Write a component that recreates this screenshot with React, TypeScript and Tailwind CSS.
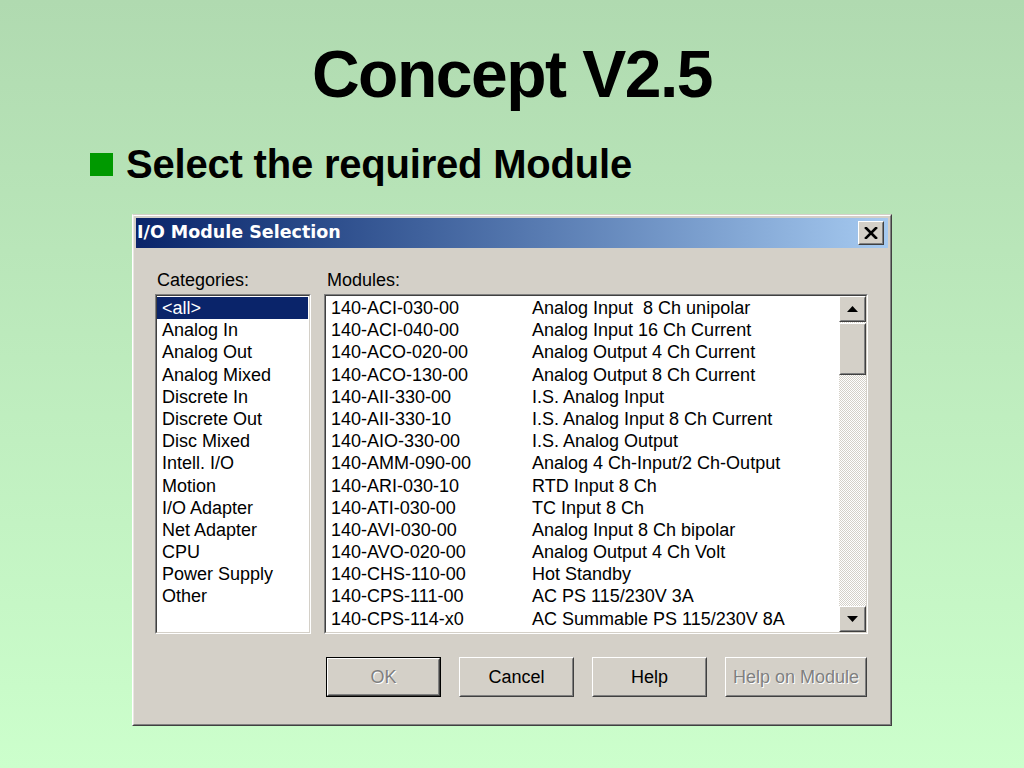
import React from "react";

const categories = [
  "<all>",
  "Analog In",
  "Analog Out",
  "Analog Mixed",
  "Discrete In",
  "Discrete Out",
  "Disc Mixed",
  "Intell. I/O",
  "Motion",
  "I/O Adapter",
  "Net Adapter",
  "CPU",
  "Power Supply",
  "Other",
];

const modules: [string, string][] = [
  ["140-ACI-030-00", "Analog Input  8 Ch unipolar"],
  ["140-ACI-040-00", "Analog Input 16 Ch Current"],
  ["140-ACO-020-00", "Analog Output 4 Ch Current"],
  ["140-ACO-130-00", "Analog Output 8 Ch Current"],
  ["140-AII-330-00", "I.S. Analog Input"],
  ["140-AII-330-10", "I.S. Analog Input 8 Ch Current"],
  ["140-AIO-330-00", "I.S. Analog Output"],
  ["140-AMM-090-00", "Analog 4 Ch-Input/2 Ch-Output"],
  ["140-ARI-030-10", "RTD Input 8 Ch"],
  ["140-ATI-030-00", "TC Input 8 Ch"],
  ["140-AVI-030-00", "Analog Input 8 Ch bipolar"],
  ["140-AVO-020-00", "Analog Output 4 Ch Volt"],
  ["140-CHS-110-00", "Hot Standby"],
  ["140-CPS-111-00", "AC PS 115/230V 3A"],
  ["140-CPS-114-x0", "AC Summable PS 115/230V 8A"],
];

function Raised({ className = "", children }: { className?: string; children?: React.ReactNode }) {
  return (
    <div className={`border border-t-white border-l-white border-r-[#404040] border-b-[#404040] ${className}`}>
      <div className="w-full h-full border border-t-[#d4d0c8] border-l-[#d4d0c8] border-r-[#808080] border-b-[#808080] flex items-center justify-center">
        {children}
      </div>
    </div>
  );
}

function Sunken({ className = "", children }: { className?: string; children?: React.ReactNode }) {
  return (
    <div className={`border border-t-[#808080] border-l-[#808080] border-r-white border-b-white ${className}`}>
      <div className="w-full h-full border border-t-[#404040] border-l-[#404040] border-r-[#d4d0c8] border-b-[#d4d0c8] bg-white flex">
        {children}
      </div>
    </div>
  );
}

function Button({ label, disabled, isDefault }: { label: string; disabled?: boolean; isDefault?: boolean }) {
  const text = disabled ? (
    <span className="text-[#808080] [text-shadow:1px_1px_0_#ffffff]">{label}</span>
  ) : (
    <span className="text-black">{label}</span>
  );
  if (isDefault) {
    return (
      <div className="h-[40px] w-[115px] border border-black">
        <Raised className="w-full h-full">{text}</Raised>
      </div>
    );
  }
  return <Raised className={`h-[40px] ${label === "Help on Module" ? "w-[142px]" : "w-[115px]"}`}>{text}</Raised>;
}

export default function App() {
  return (
    <div className="w-[1024px] h-[768px] overflow-hidden bg-gradient-to-b from-[#b0dab0] to-[#ccffcc] flex flex-col font-['Liberation_Sans',Arial,sans-serif]">
      <div className="mt-[41px] h-[66px] text-[66px] leading-none font-bold text-black text-center tracking-[-1.5px]">
        Concept V2.5
      </div>
      <div className="mt-[37px] h-[40px] flex items-center pl-[90px]">
        <div className="w-[23px] h-[23px] bg-[#009900]" />
        <div className="ml-[13px] text-[40px] leading-none font-bold text-black tracking-[-0.2px]">
          Select the required Module
        </div>
      </div>

      {/* Dialog */}
      <div className="mt-[30px] ml-[132px] w-[760px] h-[512px] border border-t-[#d4d0c8] border-l-white border-r-[#404040] border-b-[#404040] bg-[#d4d0c8]">
        <div className="w-full h-full border border-t-white border-l-[#e8e6e2] border-r-[#808080] border-b-[#808080] p-[2px] flex flex-col">
          {/* Title bar */}
          <div className="h-[30px] bg-gradient-to-r from-[#0a246a] to-[#a6caf0] flex items-center justify-between pl-[1px] pr-[4px]">
            <span className="font-['DejaVu_Sans',sans-serif] font-bold text-white text-[17.5px] leading-none">
              I/O Module Selection
            </span>
            <Raised className="w-[26px] h-[24px] bg-[#d4d0c8]">
              <svg width="14" height="12" viewBox="0 0 14 12">
                <path d="M2 1 L12 11 M12 1 L2 11" stroke="black" strokeWidth="2.6" strokeLinecap="square" />
              </svg>
            </Raised>
          </div>

          {/* Body */}
          <div className="flex-1 pl-[19px] pr-[20px] pt-[21px] text-[18px] text-black">
            <div className="flex gap-[13px]">
              <div className="flex flex-col w-[156px]">
                <div className="h-[22px] leading-[22px] pl-[2px]">Categories:</div>
                <Sunken className="mt-[3px] h-[340px] w-[156px]">
                  <div className="flex-1 pt-[1px] pr-[1px]">
                    {categories.map((c, i) => (
                      <div
                        key={c}
                        className={`h-[22.2px] leading-[22px] pl-[5px] whitespace-pre ${i === 0 ? "bg-[#0a246a] text-white" : ""}`}
                      >
                        {c}
                      </div>
                    ))}
                  </div>
                </Sunken>
              </div>
              <div className="flex flex-col w-[544px]">
                <div className="h-[22px] leading-[22px] pl-[3px]">Modules:</div>
                <Sunken className="mt-[3px] h-[340px] w-[544px]">
                  <div className="flex-1 pt-[1px] pl-[5px] overflow-hidden">
                    {modules.map(([code, desc]) => (
                      <div key={code} className="h-[22.2px] leading-[22px] flex whitespace-pre">
                        <span className="w-[201px] shrink-0">{code}</span>
                        <span>{desc}</span>
                      </div>
                    ))}
                  </div>
                  <div className="w-[27px] flex flex-col bg-[repeating-conic-gradient(#d4d0c8_0%_25%,#ffffff_0%_50%)] bg-[length:2px_2px]">
                    <Raised className="h-[26px] w-[27px] bg-[#d4d0c8]">
                      <svg width="11" height="6" viewBox="0 0 11 6">
                        <path d="M5.5 0 L11 6 L0 6 Z" fill="black" />
                      </svg>
                    </Raised>
                    <div className="h-[1px]" />
                    <Raised className="h-[52px] w-[27px] bg-[#d4d0c8]" />
                    <div className="flex-1" />
                    <Raised className="h-[26px] w-[27px] bg-[#d4d0c8]">
                      <svg width="11" height="6" viewBox="0 0 11 6">
                        <path d="M0 0 L11 0 L5.5 6 Z" fill="black" />
                      </svg>
                    </Raised>
                  </div>
                </Sunken>
              </div>
            </div>
            <div className="mt-[23px] ml-[171px] flex gap-[18px]">
              <Button label="OK" disabled isDefault />
              <Button label="Cancel" />
              <Button label="Help" />
              <Button label="Help on Module" disabled />
            </div>
          </div>
        </div>
      </div>
    </div>
  );
}
